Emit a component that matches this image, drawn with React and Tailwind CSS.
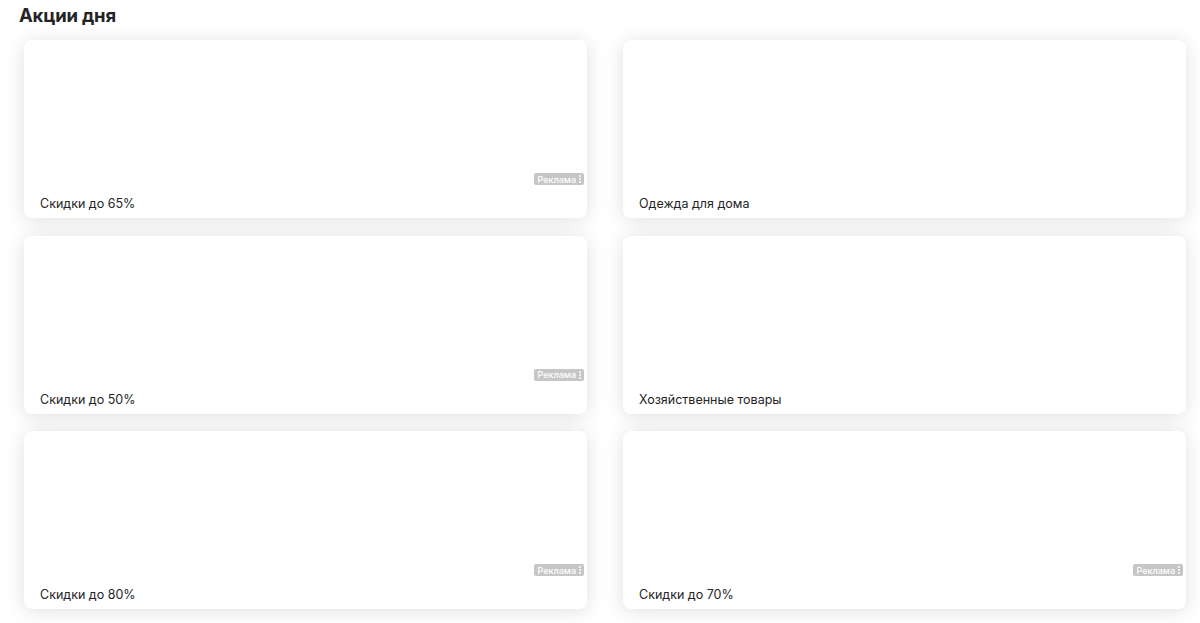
const cards = [
  { title: "Скидки до 65%", ad: true },
  { title: "Одежда для дома", ad: false },
  { title: "Скидки до 50%", ad: true },
  { title: "Хозяйственные товары", ad: false },
  { title: "Скидки до 80%", ad: true },
  { title: "Скидки до 70%", ad: true },
];

function AdBadge() {
  return (
    <div className="absolute right-[3px] bottom-[33px] flex h-[12px] items-center gap-[3px] rounded-[2px] bg-[#c6c6c6] pl-[3px] pr-[3px] text-[9px] leading-none font-medium text-white">
      <span>Реклама</span>
      <span className="flex flex-col gap-[1px]">
        <span className="h-[2px] w-[2px] rounded-full bg-white" />
        <span className="h-[2px] w-[2px] rounded-full bg-white" />
        <span className="h-[2px] w-[2px] rounded-full bg-white" />
      </span>
    </div>
  );
}

export default function App() {
  return (
    <main className="min-h-screen bg-white font-['Inter',sans-serif] text-[#242424]">
      <h1 className="pl-[19px] pt-[4px] text-[18.5px] leading-[22px] font-bold tracking-[-0.2px]">
        Акции дня
      </h1>
      <div className="mt-[14px] grid grid-cols-[563px_563px] gap-x-[36px] gap-y-[17.5px] pl-[24px]">
        {cards.map((c) => (
          <div
            key={c.title}
            className="relative flex h-[178px] items-end rounded-[8px] bg-white px-[16px] pb-[6px] shadow-[0_2px_20px_rgba(0,0,0,0.13)]"
          >
            <span className="text-[12.5px] leading-[16px] font-normal">{c.title}</span>
            {c.ad && <AdBadge />}
          </div>
        ))}
      </div>
    </main>
  );
}
